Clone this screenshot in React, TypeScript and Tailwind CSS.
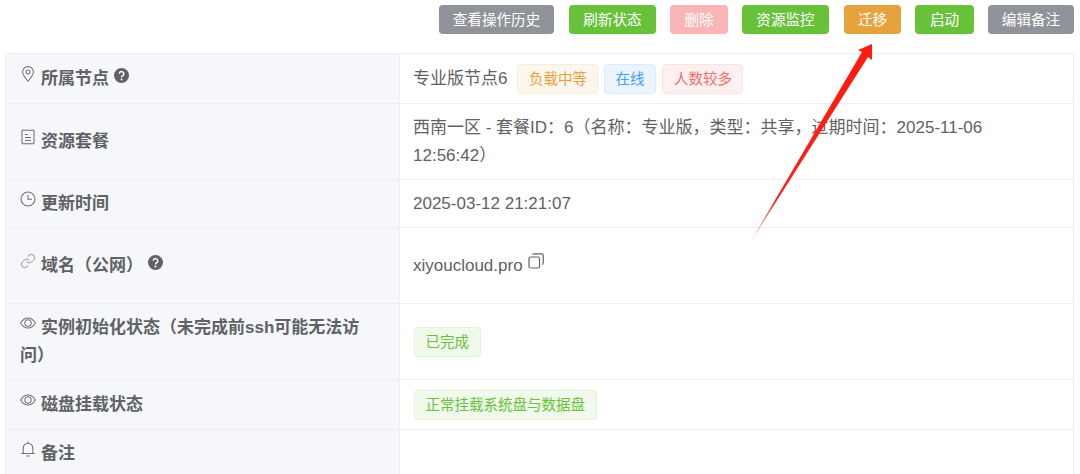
import React from "react";
import { Link } from "lucide-react";

const btns: [string, string][] = [
  ["查看操作历史", "w-[115px] bg-[#909399]"],
  ["刷新状态", "w-[87px] ml-px bg-[#67c23a]"],
  ["删除", "w-[58px] bg-[#fab6b6]"],
  ["资源监控", "w-[87px] bg-[#67c23a]"],
  ["迁移", "w-[57px] ml-px bg-[#e6a23c]"],
  ["启动", "w-[59px] bg-[#67c23a]"],
  ["编辑备注", "w-[86px] bg-[#909399]"],
];

function Help({ className = "" }: { className?: string }) {
  return (
    <svg viewBox="0 0 16 16" className={`inline-block w-[15px] h-[15px] align-[1px] ${className}`}>
      <circle cx="8" cy="8" r="8" fill="#606266" />
      <path d="M5.6 6.2a2.4 2.4 0 1 1 3.7 2c-.8.5-1.3.9-1.3 1.8" fill="none" stroke="#fff" strokeWidth="1.6" />
      <circle cx="8" cy="12.2" r="1" fill="#fff" />
    </svg>
  );
}

const iconCls = "inline-block w-[16px] h-[16px] mr-[5px] align-[2px] text-[#707277]";

function Ico({ children }: { children: React.ReactNode }) {
  return (
    <svg viewBox="0 0 16 16" fill="none" stroke="currentColor" strokeWidth="1.05" className={iconCls}>
      {children}
    </svg>
  );
}

const PinIcon = () => (
  <Ico>
    <path d="M8 15.2C5.2 11.8 2.6 9 2.6 6a5.4 5.4 0 0 1 10.8 0c0 3-2.6 5.8-5.4 9.2Z" />
    <circle cx="8" cy="6" r="2" />
  </Ico>
);
const DocIcon = () => (
  <Ico>
    <rect x="2" y="1.2" width="12" height="13.6" rx="0.6" />
    <path d="M5 5.5H8M5 8.5H11M5 11.5H11" />
  </Ico>
);
const ClockIcon = () => (
  <Ico>
    <circle cx="8" cy="8" r="7" />
    <path d="M8 3.8V8.3H12" />
  </Ico>
);
const EyeIcon = () => (
  <Ico>
    <path d="M.6 8C2.6 4.6 5.2 3 8 3s5.4 1.6 7.4 5c-2 3.4-4.6 5-7.4 5S2.6 11.400.6 8Z" />
    <circle cx="8" cy="8" r="3.2" />
  </Ico>
);
const BellIcon = () => (
  <Ico>
    <path d="M3.2 12.500V7a4.800 4.800 0 0 1 9.600 0v5.500M1.200 12.500H14.800M6.300 15H9.700M8 .600V2.200" />
  </Ico>
);

function Tag({ children, className }: { children: React.ReactNode; className: string }) {
  return (
    <span className={`inline-flex items-center h-[30px] px-[10.5px] rounded-[4px] border text-[14.5px] ${className}`}>
      {children}
    </span>
  );
}

function Row({ h, label, children, last }: { h: string; label: React.ReactNode; children?: React.ReactNode; last?: boolean }) {
  return (
    <div className={`flex ${h} ${last ? "" : "border-b border-[#ebeef5]"}`}>
      <div className="w-[394px] shrink-0 flex items-center pl-[14px] pr-[15px] bg-[#f5f7fa] border-r border-[#ebeef5] font-bold">
        <div>{label}</div>
      </div>
      <div className="flex-1 flex items-center pl-[13px] pr-[14px]">{children}</div>
    </div>
  );
}

export default function App() {
  return (
    <div className="relative w-[1080px] h-[474px] overflow-hidden bg-white text-[#606266] text-[17px] leading-[28px] font-['Liberation_Sans','Noto_Sans_CJK_SC',sans-serif]">
      <div className="flex justify-end gap-[14px] pt-[5px] pr-[6px] h-[53px]">
        {btns.map(([t, c]) => (
          <div key={t} className={`h-[29px] rounded-[4px] flex items-center justify-center text-white text-[14.6px] ${c}`}>
            {t}
          </div>
        ))}
      </div>
      <div className="ml-[5px] mr-[6px] border-l border-r border-t border-[#ebeef5]">
        <Row h="h-[50px]" label={<><PinIcon />所属节点<Help className="ml-[5px]" /></>}>
          <div className="flex items-center gap-[5.5px]">
            <span className="mr-[4.5px]">专业版节点6</span>
            <Tag className="bg-[#fdf6ec] border-[#faecd8] text-[#e6a23c]">负载中等</Tag>
            <Tag className="bg-[#ecf5ff] border-[#d9ecff] text-[#409eff]">在线</Tag>
            <Tag className="ml-px bg-[#fef0f0] border-[#fde2e2] text-[#f56c6c]">人数较多</Tag>
          </div>
        </Row>
        <Row h="h-[76px]" label={<><DocIcon />资源套餐</>}>
          <div className="w-[620px]">西南一区 - 套餐ID：6（名称：专业版，类型：共享，过期时间：2025-11-06 12:56:42）</div>
        </Row>
        <Row h="h-[48px]" label={<><ClockIcon />更新时间</>}>
          <div>2025-03-12 21:21:07</div>
        </Row>
        <Row h="h-[76px]" label={<><Link className={iconCls} strokeWidth={1.1} />域名（公网）<Help className="ml-[5px]" /></>}>
          <div>
            xiyoucloud.pro
            <svg viewBox="0 0 16 16" fill="none" stroke="#606266" strokeWidth="1.2" className="inline-block w-[16px] h-[16px] ml-[5px] align-[2px]">
              <rect x="1" y="4" width="10.500" height="11" rx="1.500" fill="#fff" />
              <path d="M4.500 1.600C4.800 1 5.300.800 6 .800h7.500c1 0 1.700.700 1.700 1.700V10c0 .700-.300 1.200-.900 1.500" />
            </svg>
          </div>
        </Row>
        <Row h="h-[76px]" label={<><span className="whitespace-nowrap"><EyeIcon />实例初始化状态（未完成前ssh可能无法访</span><br />问）</>}>
          <Tag className="ml-px bg-[#f0f9eb] border-[#e1f3d8] text-[#67c23a]">已完成</Tag>
        </Row>
        <Row h="h-[50px]" label={<><EyeIcon />磁盘挂载状态</>}>
          <Tag className="ml-px bg-[#f0f9eb] border-[#e1f3d8] text-[#67c23a]">正常挂载系统盘与数据盘</Tag>
        </Row>
        <Row h="h-[48px]" last label={<><BellIcon />备注</>} />
      </div>
      <svg className="absolute inset-0 pointer-events-none" width="1080" height="474" viewBox="0 0 1080 474">
        <defs>
          <linearGradient id="arrow" gradientUnits="userSpaceOnUse" x1="748" y1="246" x2="872" y2="44">
            <stop offset="0" stopColor="#ff2015" stopOpacity="0.1" />
            <stop offset="0.22" stopColor="#ff2015" stopOpacity="1" />
            <stop offset="1" stopColor="#ff1a10" />
          </linearGradient>
        </defs>
        <polygon points="748,246 868,57 872,60 872,44 858,50 862,52" fill="url(#arrow)" />
      </svg>
    </div>
  );
}
